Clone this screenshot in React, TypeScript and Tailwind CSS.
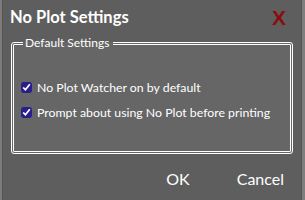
export default function App() {
  return (
    <div className="w-[305px] h-[200px] flex bg-[#5e5e5e] overflow-hidden" style={{ fontFamily: 'Lato, "Noto Sans", sans-serif' }}>
      <div className="w-[3px] bg-[#7c7c7c] border-r border-[#555]" />
      <div className="flex-1 flex flex-col">
        <div className="flex items-center justify-between h-[34px] pl-[7px] pr-[15px] pt-[1px]">
          <div className="text-white font-bold text-[16.5px]">No Plot Settings</div>
          <div className="text-[#8a0d0d] font-bold text-[21px] leading-none" style={{ fontFamily: '"Liberation Sans", sans-serif' }}>X</div>
        </div>
        <fieldset className="mx-[8px] mt-[3px] h-[117px] border-[3px] border-double border-white rounded-[3px] bg-[#666666] px-[7px]">
          <legend className="text-white text-[12px] leading-none pl-[2px] pr-[4px] ml-[2px] -mb-px">Default Settings</legend>
          <div className="flex flex-col gap-[10px] mt-[32px]">
            <label className="flex items-center gap-[5px] text-white text-[12.3px] leading-[15px] whitespace-nowrap">
              <input type="checkbox" defaultChecked className="w-[11px] h-[11px] m-0 accent-[#2a1e8a]" />
              No Plot Watcher on by default
            </label>
            <label className="flex items-center gap-[5px] text-white text-[12.3px] leading-[15px] whitespace-nowrap">
              <input type="checkbox" defaultChecked className="w-[11px] h-[11px] m-0 accent-[#2a1e8a]" />
              Prompt about using No Plot before printing
            </label>
          </div>
        </fieldset>
        <div className="flex-1 flex items-center justify-end pr-[17px] pt-[4px] text-white text-[16px] gap-[47px]">
          <span>OK</span>
          <span>Cancel</span>
        </div>
      </div>
      <div className="w-[4px] bg-[#7e7e7e] border-l border-[#555]" />
    </div>
  )
}
